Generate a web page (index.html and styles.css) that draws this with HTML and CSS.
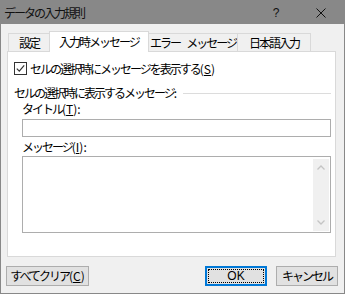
FILE: index.html
```html
<!DOCTYPE html>
<html lang="ja">
<head>
<meta charset="utf-8">
<title>データの入力規則</title>
<link rel="stylesheet" href="styles.css">
</head>
<body>
<div class="window">
  <div class="titlebar">
    <span class="title">データの入力規則</span>
    <span class="cap-btn help">?</span>
    <span class="cap-btn close"><svg width="10" height="10" viewBox="0 0 10 10"><path d="M0.5 0.5 L9.5 9.5 M9.5 0.5 L0.5 9.5" stroke="#111" stroke-width="1" fill="none"/></svg></span>
  </div>
  <div class="client">
    <div class="tabs">
      <div class="tab t1">設定</div>
      <div class="tab t2 active">入力時メッセージ</div>
      <div class="tab t3">エラー<span class="sp"> </span>メッセージ</div>
      <div class="tab t4">日本語入力</div>
    </div>
    <div class="panel">
      <div class="check-row">
        <span class="checkbox"><svg width="11" height="11" viewBox="0 0 11 11"><path d="M1.8 5.6 L4.3 8.1 L9.2 2.4" stroke="#333" stroke-width="1.2" fill="none"/></svg></span>
        <span class="label">セルの選択時にメッセージを表示する<span class="hw">(<u>S</u>)</span></span>
      </div>
      <div class="group-head"><span>セルの選択時に表示するメッセージ<span class="hw">:</span></span><span class="rule"></span></div>
      <div class="field-label">タイトル<span class="hw">(<u>T</u>):</span></div>
      <div class="input"></div>
      <div class="field-label">メッセージ<span class="hw">(<u>I</u>):</span></div>
      <div class="textarea">
        <div class="scrollbar">
          <svg width="16" height="17" viewBox="0 0 16 17"><path d="M4.5 10.5 L8 7 L11.5 10.5" stroke="#c4c4c4" stroke-width="1.3" fill="none"/></svg>
          <svg width="16" height="17" viewBox="0 0 16 17"><path d="M4.5 6.5 L8 10 L11.5 6.5" stroke="#c4c4c4" stroke-width="1.3" fill="none"/></svg>
        </div>
      </div>
    </div>
    <div class="buttons">
      <div class="btn clear">すべてクリア<span class="hw">(<u>C</u>)</span></div>
      <div class="btn ok"><span class="focus">OK</span></div>
      <div class="btn cancel">キャンセル</div>
    </div>
  </div>
</div>
</body>
</html>
```
FILE: styles.css
```css
html, body {
  margin: 0;
  padding: 0;
  background: #f0f0f0;
}
body {
  font-family: "Noto Sans CJK JP", "Noto Sans", sans-serif;
  font-size: 12px;
  color: #000;
  letter-spacing: -2px;
}
.hw {
  letter-spacing: 0;
}
.sp {
  display: inline-block;
  width: 6px;
}
.window {
  box-sizing: border-box;
  width: 345px;
  height: 294px;
  border: 1px solid #888;
  background: #f0f0f0;
  display: flex;
  flex-direction: column;
}
.titlebar {
  height: 23px;
  background: #888;
  display: flex;
  align-items: center;
  padding-left: 3px;
  color: #111;
}
.title {
  flex: 1;
  line-height: 23px;
}
.cap-btn {
  height: 23px;
  display: flex;
  align-items: center;
  justify-content: center;
}
.help {
  width: 44px;
  font-family: "Liberation Sans", sans-serif;
  font-size: 12px;
  letter-spacing: 0;
}
.close {
  width: 46px;
}
.client {
  padding: 7px 0 0 6px;
  display: flex;
  flex-direction: column;
}
.tabs {
  display: flex;
  align-items: flex-end;
  height: 20px;
  margin-left: 1px;
}
.tab {
  box-sizing: border-box;
  height: 18px;
  border: 1px solid #d9d9d9;
  border-bottom: none;
  background: #f0f0f0;
  display: flex;
  align-items: center;
  justify-content: center;
  line-height: 14px;
}
.t1 { width: 42px; }
.t2 { width: 100px; margin-left: -1px; }
.t3 { width: 90px; margin-left: -1px; }
.t4 { width: 74px; margin-left: -1px; }
.tab.active {
  height: 21px;
  margin-bottom: -1px;
  background: #fff;
  position: relative;
  z-index: 1;
}
.panel {
  box-sizing: border-box;
  width: 329px;
  height: 206px;
  border: 1px solid #d9d9d9;
  background: #fff;
  padding-top: 10px;
  display: flex;
  flex-direction: column;
}
.check-row {
  height: 13px;
  display: flex;
  align-items: center;
  padding-left: 6px;
}
.checkbox {
  box-sizing: border-box;
  width: 13px;
  height: 13px;
  border: 1px solid #333;
  background: #fff;
  display: flex;
  margin-right: 3px;
}
.label {
  line-height: 14px;
}
.group-head {
  height: 14px;
  margin-top: 11px;
  padding: 0 4px 0 6px;
  display: flex;
  align-items: center;
  line-height: 14px;
}
.rule {
  flex: 1;
  height: 1px;
  background: #dcdcdc;
  margin-left: 6px;
}
.field-label {
  height: 14px;
  line-height: 14px;
  margin-top: 2px;
  padding-left: 14px;
}
.input {
  box-sizing: border-box;
  width: 309px;
  height: 18px;
  margin: 3px 0 0 14px;
  border: 1px solid #adadad;
  background: #fff;
}
.input + .field-label {
  margin-top: 3px;
}
.textarea {
  box-sizing: border-box;
  width: 309px;
  height: 77px;
  margin: 2px 0 0 14px;
  border: 1px solid #adadad;
  background: #fff;
  padding: 2px 1px 1px 0;
  display: flex;
  justify-content: flex-end;
}
.scrollbar {
  width: 16px;
  background: #f0f0f0;
  display: flex;
  flex-direction: column;
  justify-content: space-between;
}
.scrollbar svg {
  display: block;
}
.buttons {
  display: flex;
  width: 332px;
  height: 20px;
  margin: 9px 0 0 -1px;
}
.btn {
  box-sizing: border-box;
  height: 20px;
  border: 1px solid #adadad;
  background: #e1e1e1;
  display: flex;
  align-items: center;
  justify-content: center;
  line-height: 14px;
}
.clear {
  width: 83px;
}
.ok {
  width: 62px;
  margin-left: auto;
  border: 2px solid #0078d7;
  padding: 1px;
  align-items: stretch;
}
.focus {
  flex: 1;
  border: 1px dotted #000;
  display: flex;
  align-items: center;
  justify-content: center;
  letter-spacing: 0;
  font-family: "Liberation Sans", sans-serif;
}
.cancel {
  width: 62px;
  margin-left: 9px;
}
```
